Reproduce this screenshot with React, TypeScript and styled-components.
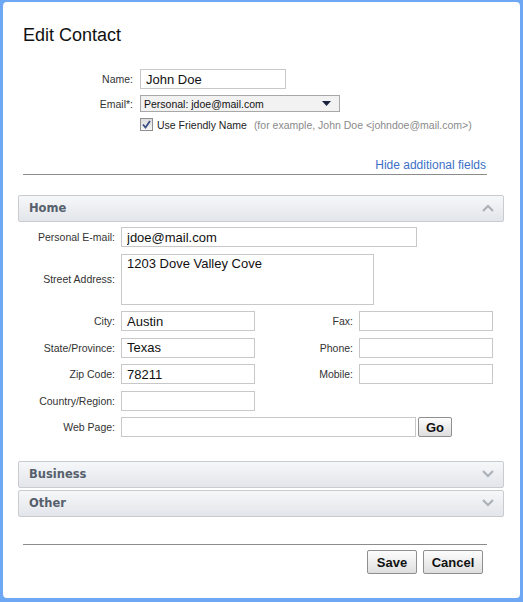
import React from 'react';
import styled, { createGlobalStyle } from 'styled-components';

const GlobalStyle = createGlobalStyle`
  html, body {
    margin: 0;
    padding: 0;
    background: #6ea8f5;
  }
  body {
    font-family: "Liberation Sans", Arial, sans-serif;
    color: #222;
  }
`;

const Frame = styled.div`
  width: 523px;
  height: 602px;
  box-sizing: border-box;
  padding: 2px 3px 4px 3px;
`;

const Panel = styled.div`
  height: 100%;
  box-sizing: border-box;
  background: #fff;
  border-radius: 4px;
  padding: 0 16px 0 15px;
  display: flex;
  flex-direction: column;
`;

const Title = styled.h1`
  margin: 22px 0 0 5px;
  font-size: 18px;
  font-weight: normal;
  line-height: 22px;
  color: #111;
`;

const TopForm = styled.div`
  display: grid;
  grid-template-columns: 110px auto;
  column-gap: 7px;
  row-gap: 6px;
  margin: 23px 0 0 5px;
  align-items: center;
`;

const Label = styled.label`
  font-size: 10.5px;
  color: #333;
  text-align: right;
  white-space: nowrap;
`;

const TextInput = styled.input<{ $w: number }>`
  box-sizing: border-box;
  width: ${p => p.$w}px;
  height: 20px;
  border: 1px solid #c8c8c8;
  padding: 0 5px;
  font-family: "Liberation Sans", Arial, sans-serif;
  font-size: 13px;
  color: #111;
  outline: none;
`;

const TextArea = styled.textarea`
  box-sizing: border-box;
  width: 253px;
  height: 51px;
  border: 1px solid #c8c8c8;
  padding: 1px 5px;
  font-family: "Liberation Sans", Arial, sans-serif;
  font-size: 13px;
  color: #111;
  resize: none;
  outline: none;
`;

const Select = styled.div`
  box-sizing: border-box;
  width: 200px;
  height: 17px;
  border: 1px solid #a8a8a8;
  background: #f2f2f2;
  display: flex;
  align-items: center;
  justify-content: space-between;
  padding: 0 8px 0 3px;
  font-size: 10.5px;
  color: #111;
`;

const CheckRow = styled.div`
  grid-column: 2;
  display: flex;
  align-items: center;
  gap: 4px;
  font-size: 10.5px;
  color: #222;
`;

const CheckBox = styled.span`
  box-sizing: border-box;
  width: 13px;
  height: 13px;
  border: 1px solid #8e8f8f;
  background: linear-gradient(#dcdcdc, #f6f6f6);
  display: flex;
  align-items: center;
  justify-content: center;
`;

const Hint = styled.span`
  color: #8a8a8a;
  margin-left: 3px;
`;

const LinkRow = styled.div`
  display: flex;
  justify-content: flex-end;
  margin: 27px 17px 0 5px;
  padding-bottom: 1px;
  border-bottom: 1px solid #8c8c8c;
`;

const Link = styled.a`
  font-size: 12px;
  color: #3d70c6;
  text-decoration: none;
  line-height: 14px;
  padding-bottom: 1px;
  margin-right: 1px;
`;

const SectionHeader = styled.div<{ $top: number }>`
  box-sizing: border-box;
  height: 27px;
  margin-top: ${p => p.$top}px;
  border: 1px solid #c9cbce;
  border-radius: 2px;
  background: linear-gradient(#f6f7f9, #e2e5ea);
  display: flex;
  align-items: center;
  justify-content: space-between;
  padding: 0 9px 1px 10px;
  font-family: "DejaVu Sans", Verdana, sans-serif;
  font-weight: bold;
  font-size: 11.5px;
  color: #56606c;
`;

const FieldGrid = styled.div`
  display: grid;
  grid-template-columns: 97px 134px 92px 134px;
  column-gap: 6px;
  row-gap: 6.5px;
  margin-top: 5px;
  align-items: center;
`;

const Span3 = styled.div`
  grid-column: 2 / span 3;
  display: flex;
  align-items: center;
  gap: 2px;
`;

const Button = styled.button<{ $w: number }>`
  box-sizing: border-box;
  width: ${p => p.$w}px;
  height: 24px;
  border: 1px solid #8f8f8f;
  border-radius: 2px;
  background: linear-gradient(#fdfdfd, #dedede);
  font-family: "Liberation Sans", Arial, sans-serif;
  font-weight: bold;
  font-size: 13px;
  color: #111;
  padding: 0;
`;

const SmallButton = styled(Button)`
  height: 20px;
`;

const Footer = styled.div`
  margin: 27px 17px 0 5px;
  padding-top: 5px;
  border-top: 1px solid #8c8c8c;
  display: flex;
  justify-content: flex-end;
  gap: 6px;
  padding-right: 4px;
`;

const Chevron = ({ up }: { up?: boolean }) => (
  <svg width="12" height="8" viewBox="0 0 12 8">
    <path
      d={up ? 'M1 7 L6 2 L11 7' : 'M1 1 L6 6 L11 1'}
      fill="none"
      stroke="#aab0b8"
      strokeWidth="2"
    />
  </svg>
);

const Arrow = () => (
  <svg width="9" height="5" viewBox="0 0 9 5">
    <path d="M0 0 H9 L4.5 5 Z" fill="#1a2240" />
  </svg>
);

const Check = () => (
  <svg width="9" height="9" viewBox="0 0 9 9">
    <path d="M1 4.5 L3.5 7.5 L8 1" fill="none" stroke="#3b4f82" strokeWidth="1.8" />
  </svg>
);

const App = () => {
  return (
    <Frame>
      <GlobalStyle />
      <Panel>
        <Title>Edit Contact</Title>

        <TopForm>
          <Label>Name:</Label>
          <TextInput $w={146} defaultValue="John Doe" />
          <Label>Email*:</Label>
          <Select>
            <span>Personal: jdoe@mail.com</span>
            <Arrow />
          </Select>
          <CheckRow>
            <CheckBox><Check /></CheckBox>
            <span>Use Friendly Name</span>
            <Hint>(for example, John Doe &lt;johndoe@mail.com&gt;)</Hint>
          </CheckRow>
        </TopForm>

        <LinkRow>
          <Link href="#">Hide additional fields</Link>
        </LinkRow>

        <SectionHeader $top={20}>
          <span>Home</span>
          <Chevron up />
        </SectionHeader>

        <FieldGrid>
          <Label>Personal E-mail:</Label>
          <Span3><TextInput $w={296} defaultValue="jdoe@mail.com" /></Span3>

          <Label>Street Address:</Label>
          <Span3><TextArea defaultValue="1203 Dove Valley Cove" /></Span3>

          <Label>City:</Label>
          <TextInput $w={134} defaultValue="Austin" />
          <Label>Fax:</Label>
          <TextInput $w={134} />

          <Label>State/Province:</Label>
          <TextInput $w={134} defaultValue="Texas" />
          <Label>Phone:</Label>
          <TextInput $w={134} />

          <Label>Zip Code:</Label>
          <TextInput $w={134} defaultValue="78211" />
          <Label>Mobile:</Label>
          <TextInput $w={134} />

          <Label>Country/Region:</Label>
          <TextInput $w={134} />
          <span />
          <span />

          <Label>Web Page:</Label>
          <Span3>
            <TextInput $w={295} />
            <SmallButton $w={34}>Go</SmallButton>
          </Span3>
        </FieldGrid>

        <SectionHeader $top={24}>
          <span>Business</span>
          <Chevron />
        </SectionHeader>
        <SectionHeader $top={2}>
          <span>Other</span>
          <Chevron />
        </SectionHeader>

        <Footer>
          <Button $w={50}>Save</Button>
          <Button $w={60}>Cancel</Button>
        </Footer>
      </Panel>
    </Frame>
  );
};

export default App;
